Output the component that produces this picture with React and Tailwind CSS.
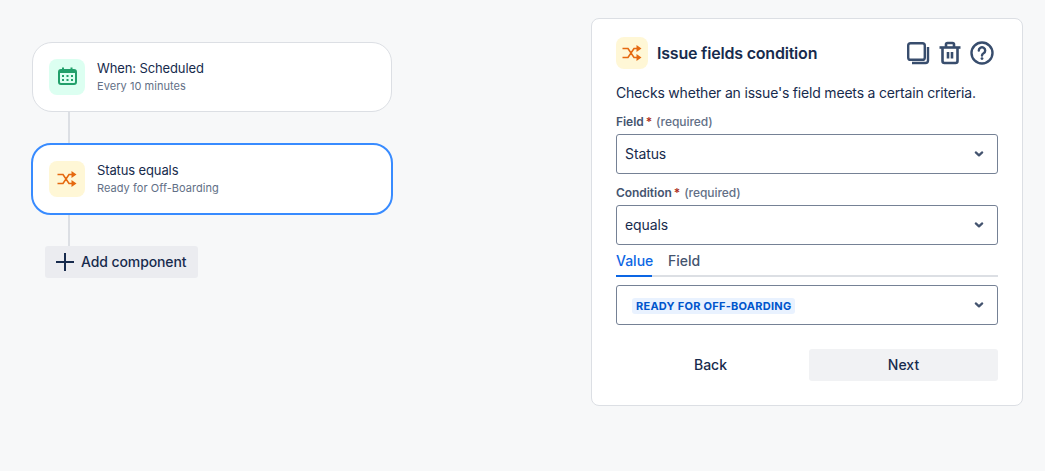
const FONT = "font-['Inter','Noto_Sans',sans-serif]";

const CalendarIcon = () => (
  <svg width="20" height="20" viewBox="0 0 20 20" fill="none">
    <path d="M5 0.5h2v3H5zM13.5 0.5h2v3h-2z" fill="#22a06b" />
    <rect x="2" y="3" width="17" height="14" rx="2" stroke="#22a06b" strokeWidth="2" />
    <path d="M2 3h17v3H2z" fill="#22a06b" />
    <g fill="#22a06b">
      <rect x="5" y="8" width="2" height="2" />
      <rect x="9.5" y="8" width="2" height="2" />
      <rect x="14" y="8" width="2" height="2" />
      <rect x="5" y="12" width="2" height="2" />
      <rect x="9.5" y="12" width="2" height="2" />
      <rect x="14" y="12" width="2" height="2" />
    </g>
  </svg>
);

const ShuffleIcon = () => (
  <svg width="20" height="20" viewBox="0 0 20 20" fill="none">
    <path d="M0.5 5.5h5.5l6 9h4M0.5 14.5h5.5l6-9h4" stroke="#e56910" strokeWidth="1.6" />
    <path d="M14.5 2l5 3.5-5 3.5zM14.5 11l5 3.5-5 3.5z" fill="#e56910" />
  </svg>
);

const Chevron = () => (
  <svg width="10" height="8" viewBox="0 0 10 8" fill="none" stroke="#44546f" strokeWidth="2.2" strokeLinecap="round" strokeLinejoin="round">
    <path d="M1.8 2.4L5 5.4l3.2-3" />
  </svg>
);

const CopyIcon = () => (
  <svg width="24" height="24" viewBox="0 0 24 24" fill="none" stroke="#384d6d" strokeWidth="2.4">
    <rect x="2.2" y="2.2" width="16.6" height="16.6" rx="2.4" />
    <path d="M22 6v13.5a2.5 2.5 0 0 1-2.5 2.5H6" />
  </svg>
);

const TrashIcon = () => (
  <svg width="24" height="24" viewBox="0 0 24 24" fill="none" stroke="#384d6d" strokeWidth="2.6">
    <path d="M1.5 6.5h21" />
    <path d="M8 6.5V3.5A1.5 1.5 0 0 1 9.5 2h5A1.5 1.5 0 0 1 16 3.5v3" />
    <path d="M4.5 6.5V20a2 2 0 0 0 2 2h11a2 2 0 0 0 2-2V6.5" />
    <path d="M10 11v6.5M14 11v6.5" />
  </svg>
);

const HelpIcon = () => (
  <svg width="24" height="24" viewBox="0 0 24 24" fill="none" stroke="#384d6d" strokeWidth="2.4">
    <circle cx="12" cy="12" r="10.5" />
    <path d="M8.8 9.5a3.2 3.2 0 1 1 4.8 2.8c-1 .6-1.6 1.1-1.6 2.2" strokeLinecap="round" />
    <circle cx="12" cy="17.6" r="1.4" fill="#384d6d" stroke="none" />
  </svg>
);

const PlusIcon = () => (
  <svg width="18" height="18" viewBox="0 0 18 18" fill="none" stroke="#172b4d" strokeWidth="2">
    <path d="M9 0v18M0 9h18" />
  </svg>
);

function FlowCard({ bg, icon, title, sub, selected }) {
  return (
    <div
      className={
        selected
          ? "h-[72px] w-[362px] -ml-px flex items-center gap-3 rounded-[20px] border-2 border-[#388bff] bg-white pl-[16px]"
          : "h-[70px] w-[360px] flex items-center gap-3 rounded-[20px] border border-[#dcdfe4] bg-white pl-[16px]"
      }
    >
      <div className={`w-9 h-9 rounded-lg flex items-center justify-center ${bg}`}>{icon}</div>
      <div className="flex flex-col">
        <span className="text-[13px] leading-[18px] tracking-[-0.12px] text-[#172b4d]">{title}</span>
        <span className="text-[11px] leading-[18px] tracking-[0.05px] text-[#626f86]">{sub}</span>
      </div>
    </div>
  );
}

function Label({ children }) {
  return (
    <div className="h-[17px] text-xs leading-[17px] font-semibold tracking-[-0.05px] text-[#44546f]">
      {children}
      <span className="text-[#ae2e24] ml-0.5">*</span>
      <span className="font-medium text-[#626f86] ml-1">(required)</span>
    </div>
  );
}

function Select({ children }) {
  return (
    <div className="h-10 flex items-center justify-between rounded-[3px] border border-[#758195] bg-white pl-2 pr-[13px] text-sm tracking-[-0.1px] text-[#172b4d]">
      {children}
      <Chevron />
    </div>
  );
}

export default function App() {
  return (
    <div className={`${FONT} w-[1045px] h-[471px] bg-[#f7f8f9] flex overflow-hidden`}>
      {/* flow */}
      <div className="w-[591px] pt-[42px] pl-8 flex flex-col items-start">
        <FlowCard bg="bg-[#dcfff1]" icon={<CalendarIcon />} title="When: Scheduled" sub="Every 10 minutes" />
        <div className="h-[31px] w-0.5 bg-[#dcdfe4] ml-9" />
        <FlowCard bg="bg-[#fff7d6]" icon={<ShuffleIcon />} title="Status equals" sub="Ready for Off-Boarding" selected />
        <div className="h-[31px] w-0.5 bg-[#dcdfe4] ml-9" />
        <button className="ml-[13px] h-8 w-[153px] flex items-center gap-[7px] pl-[11px] rounded-[3px] bg-[#ebecf0] text-sm font-[450] tracking-[-0.1px] text-[#172b4d]">
          <PlusIcon />
          Add component
        </button>
      </div>

      {/* config panel */}
      <div className="mt-[18px] w-[432px] h-[388px] rounded-lg border border-[#dcdfe4] bg-white px-6 pt-[18px]">
        <div className="flex items-center h-8">
          <div className="w-8 h-8 rounded-lg bg-[#fff7d6] flex items-center justify-center">
            <ShuffleIcon />
          </div>
          <h2 className="ml-[9px] text-base font-semibold tracking-[-0.2px] text-[#172b4d]">Issue fields condition</h2>
          <div className="ml-auto flex items-center gap-2 mr-1">
            <CopyIcon />
            <TrashIcon />
            <HelpIcon />
          </div>
        </div>
        <p className="mt-[14px] text-sm leading-5 tracking-[-0.19px] text-[#172b4d]">Checks whether an issue's field meets a certain criteria.</p>
        <div className="mt-[10px]"><Label>Field</Label></div>
        <div className="mt-[4px]"><Select>Status</Select></div>
        <div className="mt-[10px]"><Label>Condition</Label></div>
        <div className="mt-[4px]"><Select>equals</Select></div>
        <div className="mt-[6px] flex h-[26px] border-b-2 border-[#dcdfe4] text-sm font-[450]">
          <span className="w-9 h-[26px] border-b-2 border-[#0c66e4] text-[#0c66e4] text-center">Value</span>
          <span className="ml-4 text-[#44546f]">Field</span>
        </div>
        <div className="mt-2">
          <Select>
            <span className="ml-[7px] mt-[2px] rounded-[3px] bg-[#e9f2ff] px-[4px] text-[11px] leading-[16px] font-bold tracking-[0.25px] text-[#0055cc]">READY FOR OFF-BOARDING</span>
          </Select>
        </div>
        <div className="mt-6 flex gap-1 text-sm font-[450] text-[#172b4d]">
          <button className="h-8 flex-1 rounded-[3px]">Back</button>
          <button className="h-8 w-[189px] rounded-[3px] bg-[#f1f2f4]">Next</button>
        </div>
      </div>
    </div>
  );
}
